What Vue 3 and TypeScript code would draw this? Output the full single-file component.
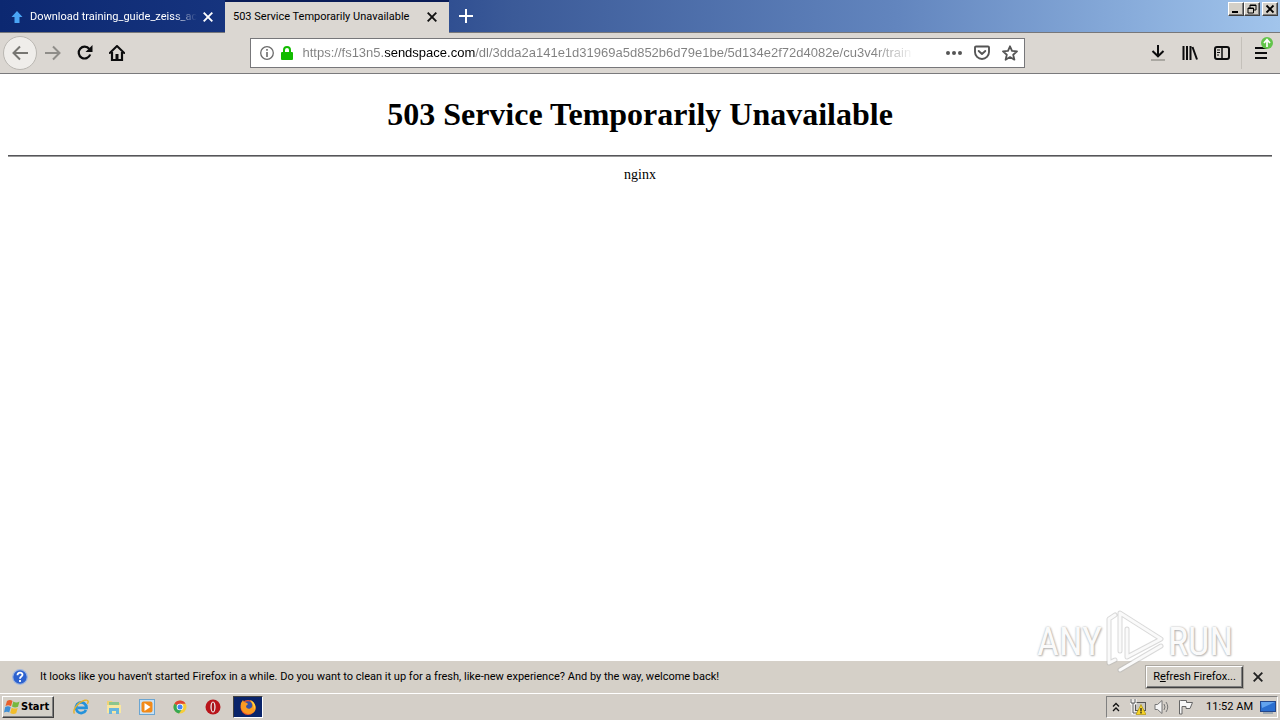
<script setup lang="ts">
import { ref } from 'vue'

const url = ref('https://fs13n5.sendspace.com/dl/3dda2a141e1d31969a5d852b6d79e1be/5d134e2f72d4082e/cu3v4r/train')
</script>

<template>
  <div class="desktop">
    <header class="titlebar">
      <div class="tab inactive">
        <svg class="fav" width="12" height="12" viewBox="0 0 12 12"><path d="M6 0L11.500 6H8.500V12H3.500V6H.5z" fill="#4aa5f5" /></svg>
        <span class="tab-title faded">Download training_guide_zeiss_ac</span>
        <button class="plain" aria-label="Close tab"><svg width="10" height="10" viewBox="0 0 10 10"><path d="M.7.7l8.600 8.600M9.300.7L.7 9.300" stroke="#fff" stroke-width="1.900" /></svg></button>
      </div>
      <div class="tab active">
        <span class="tab-title">503 Service Temporarily Unavailable</span>
        <button class="plain" aria-label="Close tab"><svg width="10" height="10" viewBox="0 0 10 10"><path d="M.7.7l8.600 8.600M9.300.7L.7 9.300" stroke="#111" stroke-width="1.900" /></svg></button>
      </div>
      <button class="plain new-tab" aria-label="New tab"><svg width="14" height="14" viewBox="0 0 14 14"><path d="M7 0v14M0 7h14" stroke="#fff" stroke-width="2" /></svg></button>
      <div class="window-buttons">
        <button class="raised wb" aria-label="Minimize"><svg width="10" height="10" viewBox="0 0 10 10"><path d="M1 8h6" stroke="#000" stroke-width="2" /></svg></button>
        <button class="raised wb" aria-label="Restore"><svg width="10" height="10" viewBox="0 0 10 10"><path d="M3 4V1h6v5H7M3 1.500h6M1 4h5.500v5H1zM1 4.500h6" fill="none" stroke="#000" /></svg></button>
        <button class="raised wb close" aria-label="Close"><svg width="10" height="10" viewBox="0 0 10 10"><path d="M1.500 1.500l7 7M8.500 1.500l-7 7" stroke="#000" stroke-width="1.800" /></svg></button>
      </div>
    </header>

    <nav class="toolbar">
      <div class="nav-buttons">
        <button class="plain back" aria-label="Back"><svg width="16" height="16" viewBox="0 0 16 16"><path d="M16 8H1.500M8 1.500L1.500 8 8 14.500" fill="none" stroke="#777672" stroke-width="2" /></svg></button>
        <button class="plain tool" aria-label="Forward"><svg width="16" height="16" viewBox="0 0 16 16"><path d="M0 8h14.500M8 1.500L14.500 8 8 14.500" fill="none" stroke="#8f8d89" stroke-width="2" /></svg></button>
        <button class="plain tool" aria-label="Reload"><svg width="16" height="16" viewBox="0 0 16 16"><path d="M13.200 9.500A5.900 5.900 0 1 1 12.300 4" fill="none" stroke="#0c0c0d" stroke-width="2.200" /><path d="M15.500 0v7H8.500z" fill="#0c0c0d" /></svg></button>
        <button class="plain tool" aria-label="Home"><svg width="16" height="16" viewBox="0 0 16 16"><path d="M.8 8L8 1l7.200 7" fill="none" stroke="#0c0c0d" stroke-width="2" stroke-linecap="round" stroke-linejoin="round" /><path d="M3 7v8h10V7" fill="none" stroke="#0c0c0d" stroke-width="2.200" /><path d="M6.500 14.500V9h3v5.500z" fill="#0c0c0d" /></svg></button>
      </div>
      <div class="address">
        <svg width="14" height="14" viewBox="0 0 14 14"><circle cx="7" cy="7" r="6.300" fill="none" stroke="#6b6b6b" stroke-width="1.300" /><path d="M7 6v5M7 3v1.800" stroke="#6b6b6b" stroke-width="1.600" /></svg>
        <svg class="lock" width="12" height="14" viewBox="0 0 12 14"><path d="M3 7V4a3 3 0 0 1 6 0v3" fill="none" stroke="#12bc00" stroke-width="2" /><rect y="6" width="12" height="8" rx="1" fill="#12bc00" /></svg>
        <input v-model="url" class="url" type="text" aria-label="Address" spellcheck="false" />
        <button class="plain" aria-label="Page actions"><svg width="16" height="16" viewBox="0 0 16 16"><g fill="#555"><circle cx="2" cy="8" r="2" /><circle cx="8" cy="8" r="2" /><circle cx="14" cy="8" r="2" /></g></svg></button>
        <button class="plain" aria-label="Save to Pocket"><svg width="16" height="16" viewBox="0 0 16 16"><path d="M2 1.500h12a1 1 0 0 1 1 1V7A7 7 0 0 1 1 7V2.500a1 1 0 0 1 1-1z" fill="none" stroke="#555" stroke-width="1.900" /><path d="M4.700 6L8 9l3.300-3" fill="none" stroke="#555" stroke-width="1.900" stroke-linecap="round" stroke-linejoin="round" /></svg></button>
        <button class="plain" aria-label="Bookmark this page"><svg width="16" height="16" viewBox="0 0 16 16"><path d="M8 1.300l2 4.600 5 .5-3.800 3.300 1.200 5L8 12.100l-4.400 2.600 1.200-5L1 6.400l5-.5z" fill="none" stroke="#555" stroke-width="1.800" stroke-linejoin="round" /></svg></button>
      </div>
      <div class="right-tools">
        <button class="plain tool" aria-label="Downloads"><svg width="16" height="16" viewBox="0 0 16 16"><path d="M8 0v11M2.500 6L8 11.300 13.500 6" fill="none" stroke="#0c0c0d" stroke-width="2" /><path d="M1 15h14" stroke="#aaa8a2" stroke-width="2" /></svg></button>
        <button class="plain tool" aria-label="Library"><svg width="16" height="16" viewBox="0 0 16 16"><path d="M1.500 1v14M5 1v14M8.500 1v14M10.500 2l4.500 12.500" stroke="#0c0c0d" stroke-width="2" /></svg></button>
        <button class="plain tool" aria-label="Sidebars"><svg width="16" height="16" viewBox="0 0 16 16"><rect x="1" y="2" width="14" height="12" rx="2" fill="none" stroke="#0c0c0d" stroke-width="2" /><path d="M8 2v12" stroke="#0c0c0d" stroke-width="1.500" /><path d="M3 5h3M3 7.500h3M3 10h2" stroke="#0c0c0d" /></svg></button>
        <div class="menu-wrap">
          <button class="plain tool" aria-label="Menu"><svg width="14" height="14" viewBox="0 0 14 14"><path d="M1 2h12M1 7h12M1 12h12" stroke="#0c0c0d" stroke-width="2" /></svg></button>
          <svg class="update" width="12" height="12" viewBox="0 0 12 12"><circle cx="6" cy="6" r="6" fill="#62c44a" /><path d="M6 10V3M3 6l3-3.500L9 6" fill="none" stroke="#fff" stroke-width="1.700" /></svg>
        </div>
      </div>
    </nav>

    <main class="page">
      <h1>503 Service Temporarily Unavailable</h1>
      <hr />
      <p>nginx</p>
    </main>

    <div class="watermark" aria-hidden="true">
      <span>ANY</span>
      <svg width="60" height="64" viewBox="0 0 60 64">
        <g fill="none" stroke-linejoin="round" stroke-linecap="round">
          <path d="M10 5L4 9v44l6-3M15 41V3L56 29 22 47V19M15 60L56 36" stroke="#b4b4b4" stroke-width="5" opacity=".5" />
          <path d="M10 5L4 9v44l6-3M15 41V3L56 29 22 47V19M15 60L56 36" stroke="#fafafa" stroke-width="3" />
        </g>
      </svg>
      <span>RUN</span>
    </div>

    <section class="notice">
      <svg width="16" height="16" viewBox="0 0 16 16"><circle cx="8" cy="8" r="7.300" fill="#2d62cf" stroke="#9fb6df" stroke-width="1.200" /><path d="M5.500 6.300C5.500 2.800 10.700 3 10.500 6 10.400 7.600 8 7.500 8 9.700M8 11v2" fill="none" stroke="#fff" stroke-width="1.800" /></svg>
      <span class="notice-text">It looks like you haven't started Firefox in a while. Do you want to clean it up for a fresh, like-new experience? And by the way, welcome back!</span>
      <button class="raised refresh">R<u>e</u>fresh Firefox...</button>
      <button class="plain notice-close" aria-label="Dismiss"><svg width="10" height="10" viewBox="0 0 10 10"><path d="M.7.7l8.600 8.600M9.300.7L.7 9.300" stroke="#222" stroke-width="1.900" /></svg></button>
    </section>

    <footer class="taskbar">
      <button class="raised start">
        <svg width="16" height="16" viewBox="0 0 16 16"><path d="M3 2q3-2 5.500 0L7 7.300Q4.500 5.500 1.500 7z" fill="#e8602c" /><path d="M9.300 2.500q3 2 6.200 0L14 7.800q-3 1.700-6-.2z" fill="#76b83f" /><path d="M1.200 8q3-1.600 5.500.2L5.200 13.500Q3 12 0 13.500z" fill="#3f8fd6" /><path d="M7.700 8.700q3 1.700 6 .2l-1.500 5.400q-3 1.500-6-.3z" fill="#f2bd2b" /></svg>
        <span>Start</span>
      </button>
      <div class="quick">
        <button class="plain launch" aria-label="Internet Explorer"><svg width="16" height="16" viewBox="0 0 16 16"><path d="M13 11A5.300 5.300 0 1 1 13.500 8.800H4.500" fill="none" stroke="#2492da" stroke-width="2.800" /><path d="M1.500 14.500C-1 11 5 3 12 1.300c4-.8 3.500 2 2.300 3.500" fill="none" stroke="#e5b22b" stroke-width="1.400" /></svg></button>
        <button class="plain launch" aria-label="Explorer"><svg width="16" height="16" viewBox="0 0 16 16"><path d="M1 2h5l1 2h7v10H1z" fill="#efd277" /><path d="M3 3h10v3H3z" fill="#8bc58d" /><path d="M1 6h14v8H1z" fill="#f8e7a0" /><path d="M3 15V9h10v6h-3v-3H6v3z" fill="#68b5dd" /></svg></button>
        <button class="plain launch" aria-label="Media Player"><svg width="16" height="16" viewBox="0 0 16 16"><rect x=".5" y=".5" width="15" height="15" fill="#c8e1f4" stroke="#6ba5d1" /><rect x="2.500" y="2.500" width="11" height="11" rx="2" fill="#f28a18" /><path d="M5.500 4l6 4-6 4z" fill="#fff" /></svg></button>
        <button class="plain launch" aria-label="Chrome"><svg width="16" height="16" viewBox="0 0 16 16"><circle cx="8" cy="8" r="6.500" fill="#f6cd39" /><path d="M8 8L2.400 4.700A6.500 6.500 0 0 1 13.600 4.700H8z" fill="#df4434" /><path d="M8 8L2.400 4.700A6.500 6.500 0 0 0 7 14.500l3.500-5z" fill="#36a853" /><circle cx="8" cy="8" r="3.300" fill="#fff" /><circle cx="8" cy="8" r="2.500" fill="#4285f4" /></svg></button>
        <button class="plain launch" aria-label="Opera"><svg width="16" height="16" viewBox="0 0 16 16"><circle cx="8" cy="8" r="7.500" fill="#b9151b" /><ellipse cx="8" cy="8" rx="2.600" ry="5.500" fill="#eee" /><ellipse cx="8" cy="8" rx="1.300" ry="4.500" fill="#a31319" /></svg></button>
        <button class="plain running" aria-label="Firefox"><svg width="18" height="18" viewBox="0 0 18 18"><circle cx="9" cy="9.500" r="7.500" fill="#f0552b" /><circle cx="9" cy="8" r="4.800" fill="#3553a8" /><path d="M2 5l2-3 1 2c2 0 3 1 4 2L7 8c0 3 4 4 6 1 1-2 0-4-2-6 5 1 7 6 5 10-2 3-7 4-10 2-3-1-5-5-4-10z" fill="#fb9b22" /><path d="M11 2c5 2 6 6 4 10 0-4-1-7-4-10z" fill="#ffd83d" /></svg></button>
      </div>
      <div class="tray">
        <svg width="8" height="10" viewBox="0 0 8 10"><path d="M1 4.500l3-3 3 3M1 9l3-3 3 3" fill="none" stroke="#111" stroke-width="1.300" /></svg>
        <svg class="t-net" width="16" height="16" viewBox="0 0 16 16"><rect x="5.500" y="3.500" width="10" height="8" fill="#c9c7c1" stroke="#555" /><path d="M1 0v4h4V0M3 4v10h4" fill="none" stroke="#fff" stroke-width="3" /><path d="M1 0v4h4V0M3 4v10h4" fill="none" stroke="#555" /><path d="M11 5.500l5 10H6z" fill="#f6d325" stroke="#a98b00" stroke-width=".6" /><path d="M11 9v3.500M11 13v1.500" stroke="#222" stroke-width="1.300" /></svg>
        <svg class="t-vol" width="16" height="16" viewBox="0 0 16 16"><path d="M1 5.500h2.500L8 1.500v13l-4.500-4H1z" fill="#f5f5f5" stroke="#777" /><path d="M10 5q2 3 0 6M12 3q3.500 5 0 10" fill="none" stroke="#777" /></svg>
        <svg class="t-flag" width="16" height="16" viewBox="0 0 16 16"><path d="M2.500 1.500h6v2h6l-2.500 6H8v-2H4V15H1.500V1.500z" fill="#f7f7f7" stroke="#666" /></svg>
        <time>11:52 AM</time>
        <svg width="16" height="14" viewBox="0 0 16 14"><rect x=".5" y="1.500" width="15" height="10" fill="#2b6fd0" stroke="#24478b" /><path d="M1 2h14L2 8z" fill="#62a3ee" /><path d="M3 13h10" stroke="#8d9cac" stroke-width="1.500" /></svg>
      </div>
    </footer>
  </div>
</template>

<style>
body { margin: 0; }
</style>

<style scoped>
.desktop {
  position: relative;
  display: flex;
  flex-direction: column;
  min-height: 100vh;
  background: #fff;
  color: #000;
  font: 11px/14px Roboto, "DejaVu Sans Condensed", sans-serif;
}
.desktop * { box-sizing: border-box; }
svg { display: block; flex: none; }
button { font: inherit; color: inherit; }
.plain { display: flex; align-items: center; justify-content: center; padding: 0; border: 0; background: none; flex: none; }
.raised {
  padding: 0;
  border: 1px solid;
  border-color: #fff #404040 #404040 #fff;
  background: #d4d0c8;
  box-shadow: inset -1px -1px #808080;
}
.titlebar {
  display: flex;
  height: 33px;
  border-bottom: 1px solid #77777a;
  background: linear-gradient(90deg, #0c2871 0%, #1a3984 25%, #3b5a98 40%, #6285be 70%, #87abda 88%, #a2c5ec 100%);
}
.tab { display: flex; align-items: center; width: 225px; height: 33px; padding: 0 13px 0 8px; }
.tab-title { flex: 1; white-space: nowrap; }
.inactive { padding-left: 11px; color: #fff; }
.inactive .fav { margin-right: 7px; }
.faded { margin-right: 6px; mask-image: linear-gradient(90deg, #000 86%, transparent); }
.active { width: 224px; padding: 0 12px 2px 8px; background: #dbd7d2; border-top: 2px solid #091c57; }
.new-tab { width: 33px; height: 32px; }
.window-buttons { display: flex; margin: 2px 2px 0 auto; align-items: flex-start; }
.wb { display: flex; align-items: center; justify-content: center; width: 16px; height: 14px; }
.close { margin-left: 2px; }
.toolbar {
  display: flex;
  align-items: center;
  height: 41px;
  padding: 0 3px;
  border-bottom: 1px solid #7a7a7c;
  background: #dbd7d2;
}
.nav-buttons, .right-tools { display: flex; align-items: center; flex: 1; }
.tool { width: 32px; height: 32px; }
.back { width: 34px; height: 34px; border: 1px solid #bab7b2; border-radius: 50%; background: #efedea; }
.address {
  display: flex;
  align-items: center;
  flex: 0 0 auto;
  width: 61%;
  max-width: 775px;
  height: 30px;
  margin-right: 6px;
  padding: 0 6px 0 9px;
  gap: 12px;
  border: 1px solid #77777a;
  background: #fff;
}
.lock { margin-left: -5px; }
.url {
  flex: 1;
  min-width: 0;
  height: 24px;
  margin: 0 17px 0 -2px;
  padding: 0;
  border: 0;
  outline: 0;
  color: transparent;
  caret-color: #000;
  background: linear-gradient(90deg, #808080 82px, #000 82px, #000 172px, #808080 172px, #808080 570px, transparent 612px);
  background-clip: text;
  font: 13px/24px "Liberation Sans", sans-serif;
}
.right-tools { justify-content: flex-end; }
.menu-wrap { position: relative; margin-left: 3px; padding-left: 3px; border-left: 1px solid #c4c0ba; }
.update { position: absolute; top: 0; right: 4px; }
.page { flex: 1; padding: 0 8px; font-family: "Liberation Serif", serif; text-align: center; }
.page h1 { margin: 21px 0 22px; font-size: 32px; line-height: 38px; }
.page hr { margin: 0; border: 0; border-top: 1px solid #55555a; border-bottom: 1px solid #999; }
.page p { margin: 9px 0; font-size: 14px; line-height: 18px; }
.watermark {
  position: absolute;
  right: 47px;
  bottom: 46px;
  display: flex;
  align-items: center;
  gap: 3px;
  color: #fafafa;
  font: 38px/64px "Liberation Sans Narrow", "Roboto Condensed", "Open Sans Condensed", "Liberation Sans", sans-serif;
  text-shadow: 0 0 2px #aaa, 1px 1px 2px #bbb;
}
.notice { display: flex; align-items: center; height: 32px; padding: 0 17px 0 12px; background: #d5d0c8; }
.notice-text { flex: 1; margin-left: 12px; white-space: nowrap; }
.refresh { width: 97px; height: 22px; box-shadow: inset -1px -1px #808080, 0 0 0 1px #aaa69f; }
.notice-close { margin-left: 10px; }
.taskbar { display: flex; align-items: center; height: 27px; padding: 0 2px; border-top: 1px solid #fff; background: #d4cfc8; }
.start { display: flex; align-items: center; gap: 1px; width: 52px; height: 22px; padding-left: 1px; font: bold 11px/14px "DejaVu Sans Condensed", sans-serif; }
.quick { display: flex; align-items: center; margin-left: 10px; }
.launch { width: 33px; height: 22px; }
.running { width: 30px; height: 22px; margin-left: 4px; border: 1px solid; border-color: #404040 #fff #fff #404040; background: #0a246a; }
.tray { display: flex; align-items: center; height: 22px; margin-left: auto; padding: 0 1px 0 5px; border: 1px solid; border-color: #808080 #fff #fff #808080; }
.t-net { margin-left: 10px; }
.t-vol { margin-left: 8px; }
.t-flag { margin-left: 8px; }
.tray time { margin: 0 7px 0 12px; }
</style>
